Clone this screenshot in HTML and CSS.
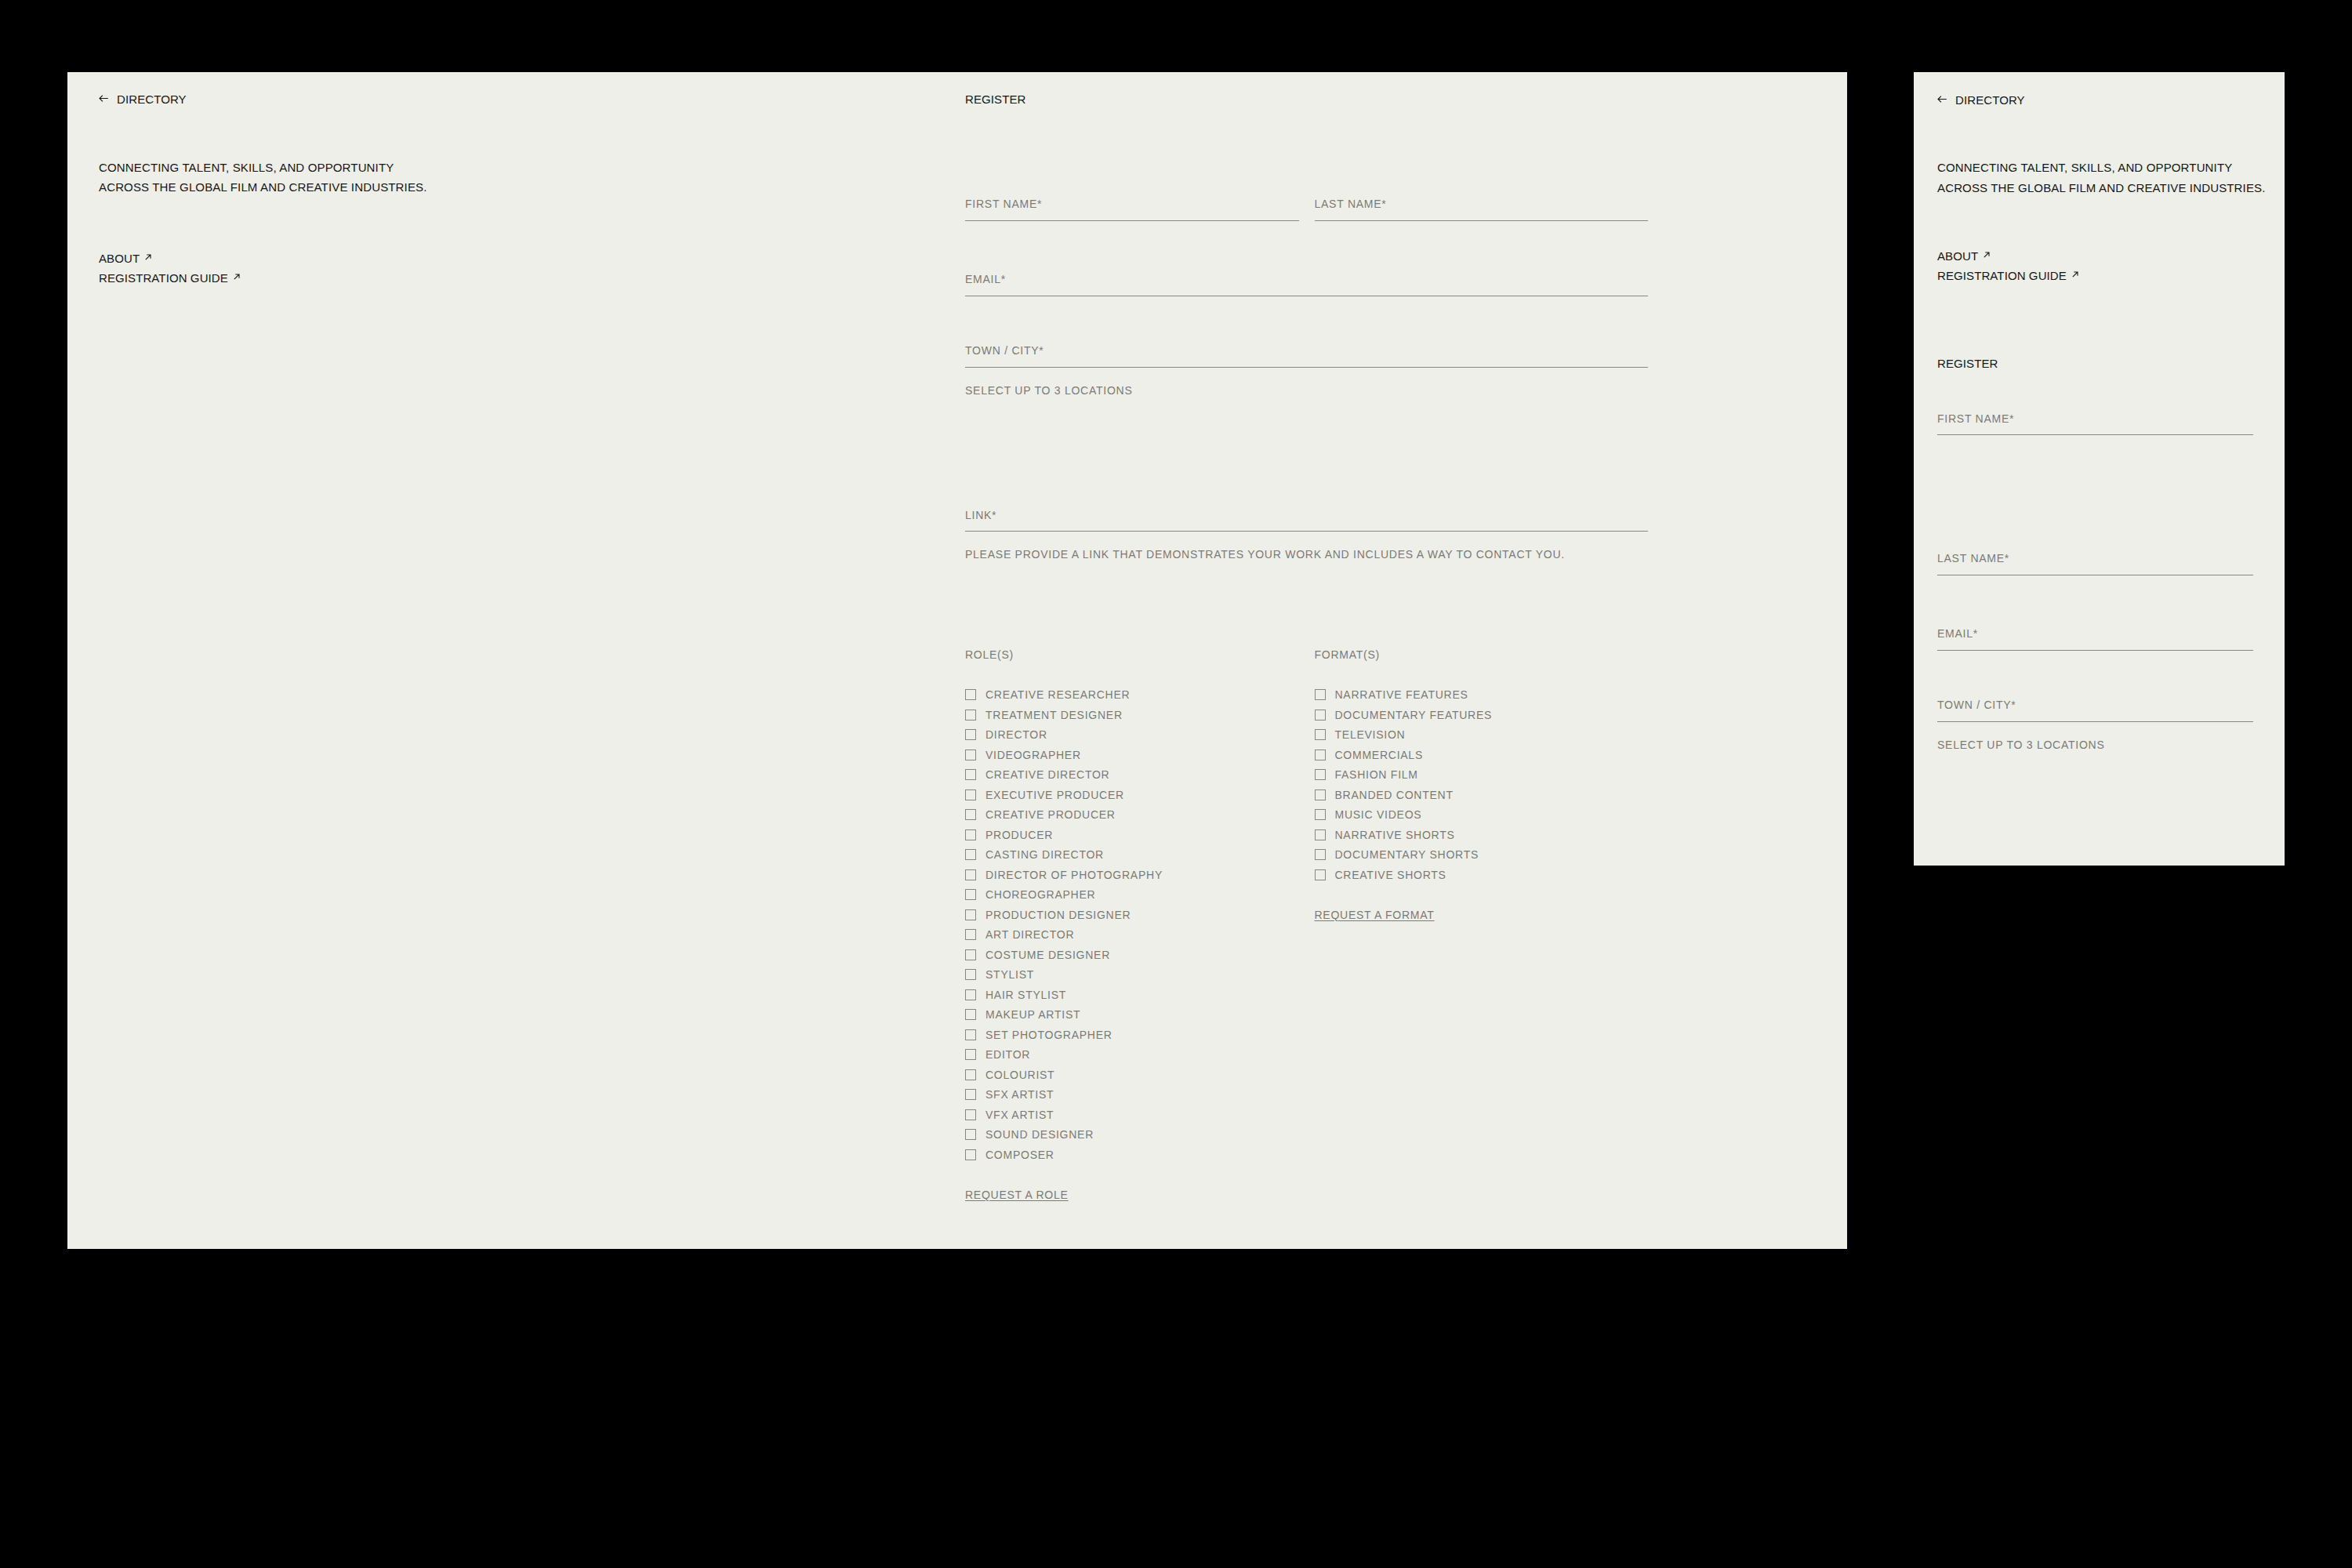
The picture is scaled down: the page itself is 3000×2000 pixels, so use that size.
FILE: index.html
```html
<!DOCTYPE html>
<html lang="en">
<head>
<meta charset="utf-8">
<title>Register — Directory</title>
<link rel="stylesheet" href="styles.css">
</head>
<body>
<div class="stage">

  <section class="panel panel--desktop">
    <div class="intro">
      <a class="back" href="#"><svg class="icon-back" width="12" height="9" viewBox="0 0 12 9"><path d="M11.8 4.5H1M4.9 0.6L1 4.5L4.9 8.4" fill="none" stroke="currentColor" stroke-width="1.1"/></svg><span>DIRECTORY</span></a>
      <p class="tagline">CONNECTING TALENT, SKILLS, AND OPPORTUNITY<br>ACROSS THE GLOBAL FILM AND CREATIVE INDUSTRIES.</p>
      <nav class="links">
        <a href="#">ABOUT<svg class="icon-ext" width="8" height="8" viewBox="0 0 8 8"><path d="M0.8 7.2L7 1M2.3 1H7V5.7" fill="none" stroke="currentColor" stroke-width="1.1"/></svg></a>
        <a href="#">REGISTRATION GUIDE<svg class="icon-ext" width="8" height="8" viewBox="0 0 8 8"><path d="M0.8 7.2L7 1M2.3 1H7V5.7" fill="none" stroke="currentColor" stroke-width="1.1"/></svg></a>
      </nav>
    </div>

    <div class="register">
      <h1 class="title">REGISTER</h1>
      <form class="form">
        <div class="names">
          <div class="field"><span>FIRST NAME*</span></div>
          <div class="field"><span>LAST NAME*</span></div>
        </div>
        <div class="field field--email"><span>EMAIL*</span></div>
        <div class="field field--town"><span>TOWN / CITY*</span></div>
        <p class="help help--town">SELECT UP TO 3 LOCATIONS</p>
        <div class="field field--link"><span>LINK*</span></div>
        <p class="help help--link">PLEASE PROVIDE A LINK THAT DEMONSTRATES YOUR WORK AND INCLUDES A WAY TO CONTACT YOU.</p>

        <div class="choices">
          <div class="group">
            <div class="legend">ROLE(S)</div>
            <ul class="options">
              <li class="option"><span class="box"></span><span>CREATIVE RESEARCHER</span></li>
              <li class="option"><span class="box"></span><span>TREATMENT DESIGNER</span></li>
              <li class="option"><span class="box"></span><span>DIRECTOR</span></li>
              <li class="option"><span class="box"></span><span>VIDEOGRAPHER</span></li>
              <li class="option"><span class="box"></span><span>CREATIVE DIRECTOR</span></li>
              <li class="option"><span class="box"></span><span>EXECUTIVE PRODUCER</span></li>
              <li class="option"><span class="box"></span><span>CREATIVE PRODUCER</span></li>
              <li class="option"><span class="box"></span><span>PRODUCER</span></li>
              <li class="option"><span class="box"></span><span>CASTING DIRECTOR</span></li>
              <li class="option"><span class="box"></span><span>DIRECTOR OF PHOTOGRAPHY</span></li>
              <li class="option"><span class="box"></span><span>CHOREOGRAPHER</span></li>
              <li class="option"><span class="box"></span><span>PRODUCTION DESIGNER</span></li>
              <li class="option"><span class="box"></span><span>ART DIRECTOR</span></li>
              <li class="option"><span class="box"></span><span>COSTUME DESIGNER</span></li>
              <li class="option"><span class="box"></span><span>STYLIST</span></li>
              <li class="option"><span class="box"></span><span>HAIR STYLIST</span></li>
              <li class="option"><span class="box"></span><span>MAKEUP ARTIST</span></li>
              <li class="option"><span class="box"></span><span>SET PHOTOGRAPHER</span></li>
              <li class="option"><span class="box"></span><span>EDITOR</span></li>
              <li class="option"><span class="box"></span><span>COLOURIST</span></li>
              <li class="option"><span class="box"></span><span>SFX ARTIST</span></li>
              <li class="option"><span class="box"></span><span>VFX ARTIST</span></li>
              <li class="option"><span class="box"></span><span>SOUND DESIGNER</span></li>
              <li class="option"><span class="box"></span><span>COMPOSER</span></li>
            </ul>
            <a class="request" href="#">REQUEST A ROLE</a>
          </div>
          <div class="group">
            <div class="legend">FORMAT(S)</div>
            <ul class="options">
              <li class="option"><span class="box"></span><span>NARRATIVE FEATURES</span></li>
              <li class="option"><span class="box"></span><span>DOCUMENTARY FEATURES</span></li>
              <li class="option"><span class="box"></span><span>TELEVISION</span></li>
              <li class="option"><span class="box"></span><span>COMMERCIALS</span></li>
              <li class="option"><span class="box"></span><span>FASHION FILM</span></li>
              <li class="option"><span class="box"></span><span>BRANDED CONTENT</span></li>
              <li class="option"><span class="box"></span><span>MUSIC VIDEOS</span></li>
              <li class="option"><span class="box"></span><span>NARRATIVE SHORTS</span></li>
              <li class="option"><span class="box"></span><span>DOCUMENTARY SHORTS</span></li>
              <li class="option"><span class="box"></span><span>CREATIVE SHORTS</span></li>
            </ul>
            <a class="request" href="#">REQUEST A FORMAT</a>
          </div>
        </div>
      </form>
    </div>
  </section>

  <section class="panel panel--mobile">
    <div class="intro">
      <a class="back" href="#"><svg class="icon-back" width="12" height="9" viewBox="0 0 12 9"><path d="M11.8 4.5H1M4.9 0.6L1 4.5L4.9 8.4" fill="none" stroke="currentColor" stroke-width="1.1"/></svg><span>DIRECTORY</span></a>
      <p class="tagline">CONNECTING TALENT, SKILLS, AND OPPORTUNITY<br>ACROSS THE GLOBAL FILM AND CREATIVE INDUSTRIES.</p>
      <nav class="links">
        <a href="#">ABOUT<svg class="icon-ext" width="8" height="8" viewBox="0 0 8 8"><path d="M0.8 7.2L7 1M2.3 1H7V5.7" fill="none" stroke="currentColor" stroke-width="1.1"/></svg></a>
        <a href="#">REGISTRATION GUIDE<svg class="icon-ext" width="8" height="8" viewBox="0 0 8 8"><path d="M0.8 7.2L7 1M2.3 1H7V5.7" fill="none" stroke="currentColor" stroke-width="1.1"/></svg></a>
      </nav>
    </div>
    <div class="register">
      <h1 class="title">REGISTER</h1>
      <form class="form">
        <div class="names">
          <div class="field"><span>FIRST NAME*</span></div>
          <div class="field"><span>LAST NAME*</span></div>
        </div>
        <div class="field field--email"><span>EMAIL*</span></div>
        <div class="field field--town"><span>TOWN / CITY*</span></div>
        <p class="help help--town">SELECT UP TO 3 LOCATIONS</p>
        <div class="field field--link"><span>LINK*</span></div>
      </form>
    </div>
  </section>

</div>
</body>
</html>
```

FILE: styles.css
```css
* { box-sizing: border-box; }

html, body {
  margin: 0;
  padding: 0;
  background: #000;
}

body {
  width: 3000px;
  min-height: 2000px;
  font-family: "Liberation Sans", Arial, sans-serif;
  font-size: 15px;
  line-height: 25.5px;
  color: #161616;
}

.stage {
  display: flex;
  align-items: flex-start;
  gap: 85px;
  padding: 92px 0 0 86px;
}

.panel {
  background: #efefe9;
  overflow: hidden;
}

.panel--desktop {
  width: 2270px;
  height: 1501px;
  padding: 22px 40px 0;
  display: grid;
  grid-template-columns: 1fr 1fr;
  column-gap: 20px;
  align-items: start;
}

.panel--mobile {
  width: 473px;
  height: 1012px;
  padding: 23px 40px 0 30px;
}

a { color: inherit; text-decoration: none; }

p { margin: 0; }

/* intro column */
.back {
  display: flex;
  align-items: center;
  gap: 11px;
  height: 25.5px;
  letter-spacing: 0.1px;
}

.icon-back {
  display: block;
  margin-top: -2px;
}

.tagline {
  margin-top: 61px;
  white-space: nowrap;
  letter-spacing: 0.15px;
}

.links {
  margin-top: 65px;
  display: flex;
  flex-direction: column;
}

.links a {
  display: block;
  letter-spacing: 0.1px;
}

.icon-ext {
  display: inline-block;
  margin-left: 7px;
  vertical-align: 3px;
}

.panel--mobile .tagline { margin-top: 60.5px; }
.panel--mobile .links { margin-top: 61.5px; }

/* register column */
.title {
  margin: 0;
  font-size: 15px;
  font-weight: 400;
  line-height: 25.5px;
  letter-spacing: 0.1px;
}

.panel--mobile .register { margin-top: 86.5px; }

.form {
  width: 871px;
  margin-top: 108.5px;
  font-size: 14px;
  letter-spacing: 0.75px;
  color: #7a7a76;
}

.panel--mobile .form {
  width: 403px;
  margin-top: 45px;
}

.names {
  display: grid;
  grid-template-columns: 1fr 1fr;
  column-gap: 20px;
}

.panel--mobile .names {
  grid-template-columns: 1fr;
  row-gap: 145px;
}

.field {
  line-height: 25.5px;
  padding-bottom: 7px;
  border-bottom: 1px solid #878783;
}

.field--email { margin-top: 62.5px; }
.field--town { margin-top: 57.5px; }
.field--link { margin-top: 133.5px; }

.help { line-height: 25.5px; }
.help--town { margin-top: 17px; }
.help--link { margin-top: 16.5px; }

.choices {
  margin-top: 103px;
  display: grid;
  grid-template-columns: 1fr 1fr;
  column-gap: 20px;
  align-items: start;
}

.legend {
  margin-bottom: 25.5px;
}

.options {
  list-style: none;
  margin: 0;
  padding: 0;
}

.option {
  display: flex;
  align-items: flex-start;
  gap: 12px;
  height: 25.5px;
}

.box {
  flex: none;
  width: 14px;
  height: 14px;
  margin-top: 5px;
  border: 1px solid #878783;
}

.request {
  display: inline-block;
  margin-top: 25.5px;
  text-decoration: underline;
  text-decoration-thickness: 1px;
  text-underline-offset: 2px;
}
```
